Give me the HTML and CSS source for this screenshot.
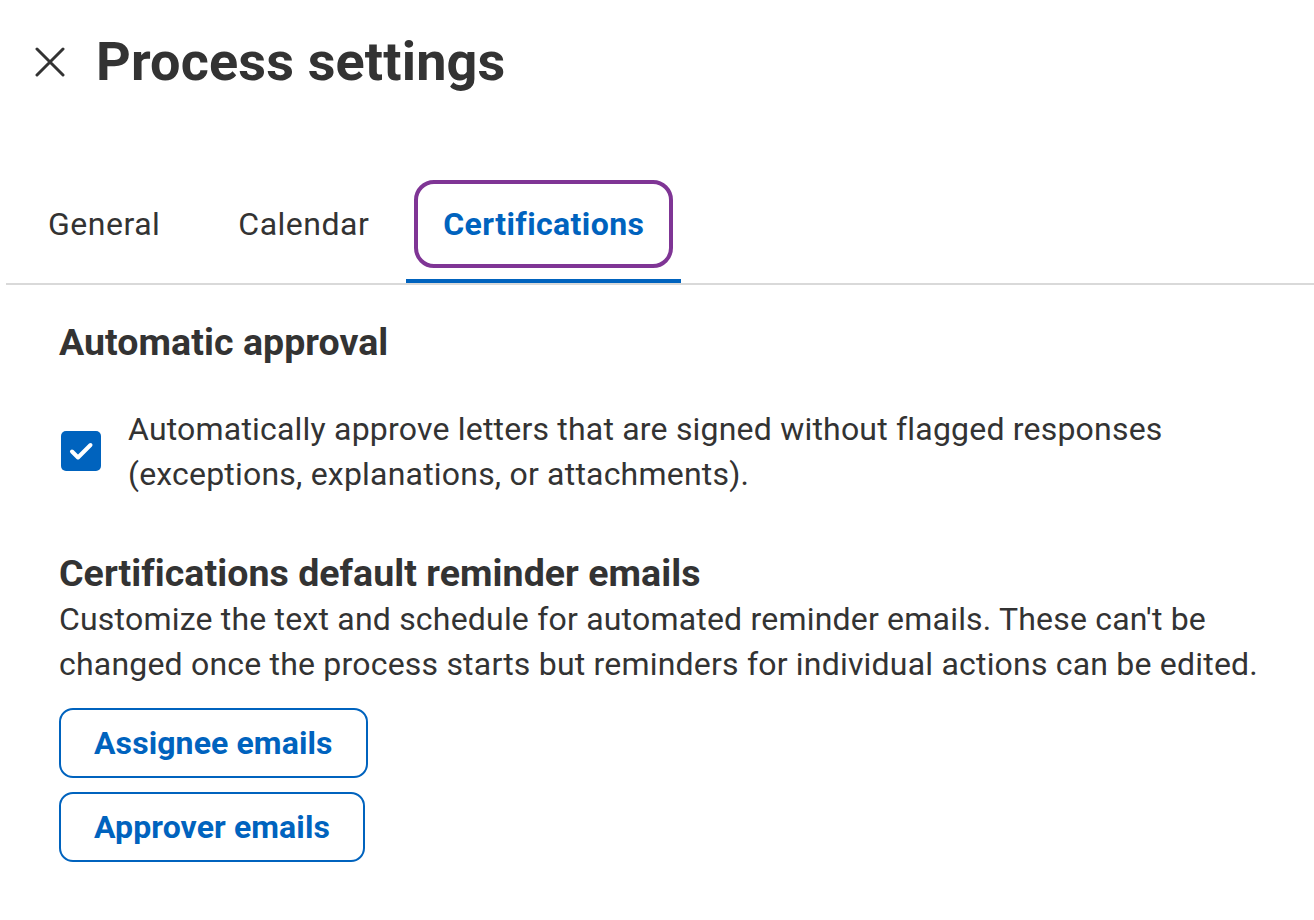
FILE: index.html
```html
<!DOCTYPE html>
<html lang="en">
<head>
<meta charset="utf-8">
<title>Process settings</title>
<link rel="stylesheet" href="styles.css">
</head>
<body>
<div class="page">
  <header class="header">
    <button class="close" aria-label="Close">
      <svg width="30" height="30" viewBox="0 0 30 30" aria-hidden="true">
        <path d="M2 2 L28 28 M28 2 L2 28" stroke="#333" stroke-width="3" stroke-linecap="round" fill="none"/>
      </svg>
    </button>
    <h1 class="title">Process settings</h1>
  </header>

  <nav class="tabs">
    <div class="tab"><span class="tab-label">General</span></div>
    <div class="tab"><span class="tab-label">Calendar</span></div>
    <div class="tab tab-active"><span class="tab-label">Certifications</span></div>
  </nav>

  <main class="content">
    <h2 class="section-title">Automatic approval</h2>
    <div class="check-row">
      <span class="checkbox">
        <svg width="40" height="40" viewBox="0 0 40 40" aria-hidden="true">
          <path d="M11 20.5 L17 26.5 L29.5 14" stroke="#fff" stroke-width="4" stroke-linecap="round" stroke-linejoin="round" fill="none"/>
        </svg>
      </span>
      <p class="check-text">Automatically approve letters that are signed without flagged responses (exceptions, explanations, or attachments).</p>
    </div>

    <h2 class="section-title section-gap">Certifications default reminder emails</h2>
    <p class="desc">Customize the text and schedule for automated reminder emails. These can't be changed once the process starts but reminders for individual actions can be edited.</p>

    <div class="buttons">
      <button class="btn">Assignee emails</button>
      <button class="btn">Approver emails</button>
    </div>
  </main>
</div>
</body>
</html>
```

FILE: styles.css
```css
* {
  box-sizing: border-box;
}

html, body {
  margin: 0;
  padding: 0;
  background: #ffffff;
}

body {
  font-family: Roboto, "Liberation Sans", Arial, sans-serif;
  color: #333333;
}

.page {
  padding-top: 30px;
}

.header {
  display: flex;
  align-items: center;
  height: 64px;
  padding-left: 35px;
}

.close {
  display: flex;
  align-items: center;
  justify-content: center;
  width: 30px;
  height: 30px;
  padding: 0;
  margin: 0;
  border: none;
  background: none;
}

.title {
  margin: 0 0 0 31px;
  font-size: 54px;
  line-height: 64px;
  font-weight: 700;
  color: #333333;
  letter-spacing: 0.15px;
}

.tabs {
  display: flex;
  gap: 2px;
  margin: 86px 0 0 6px;
  padding-left: 5px;
  border-bottom: 2px solid #d9d9d9;
}

.tab {
  padding: 0 8px 11px;
  border-bottom: 4px solid transparent;
}

.tab-label {
  display: block;
  padding: 18px 25px;
  border: 4px solid transparent;
  border-radius: 20px;
  font-size: 32px;
  line-height: 44px;
  letter-spacing: 0.5px;
  color: #333333;
}

.tab-active {
  margin-left: -2px;
  border-bottom-color: #0063be;
}

.tab-active .tab-label {
  border-color: #7f3595;
  color: #0063be;
  font-weight: 700;
  letter-spacing: 0.4px;
}

.tab:nth-child(2) {
  margin-left: 2px;
}

.content {
  padding: 35px 24px 0 59px;
}

.section-title {
  margin: 0;
  font-size: 37.5px;
  line-height: 44.8px;
  font-weight: 700;
  letter-spacing: 0.05px;
  color: #333333;
}

.section-gap {
  margin-top: 55px;
}

.check-row {
  display: flex;
  align-items: flex-start;
  gap: 27px;
  margin-top: 42px;
  padding-left: 2px;
}

.checkbox {
  flex: none;
  width: 40px;
  height: 40px;
  margin-top: 24px;
  border-radius: 5px;
  background: #0063be;
}

.checkbox svg {
  display: block;
}

.check-text,
.desc {
  margin: 0;
  font-size: 32px;
  line-height: 44.8px;
  letter-spacing: 0.2px;
  color: #333333;
}

.desc {
  margin-top: 1px;
}

.buttons {
  display: flex;
  flex-direction: column;
  align-items: flex-start;
  gap: 14px;
  margin-top: 21px;
}

.btn {
  height: 70px;
  padding: 11px 33px;
  border: 2px solid #0063be;
  border-radius: 14px;
  background: #ffffff;
  font-family: Roboto, "Liberation Sans", Arial, sans-serif;
  font-size: 32px;
  line-height: 44px;
  font-weight: 700;
  letter-spacing: 0.1px;
  color: #0063be;
}
```
